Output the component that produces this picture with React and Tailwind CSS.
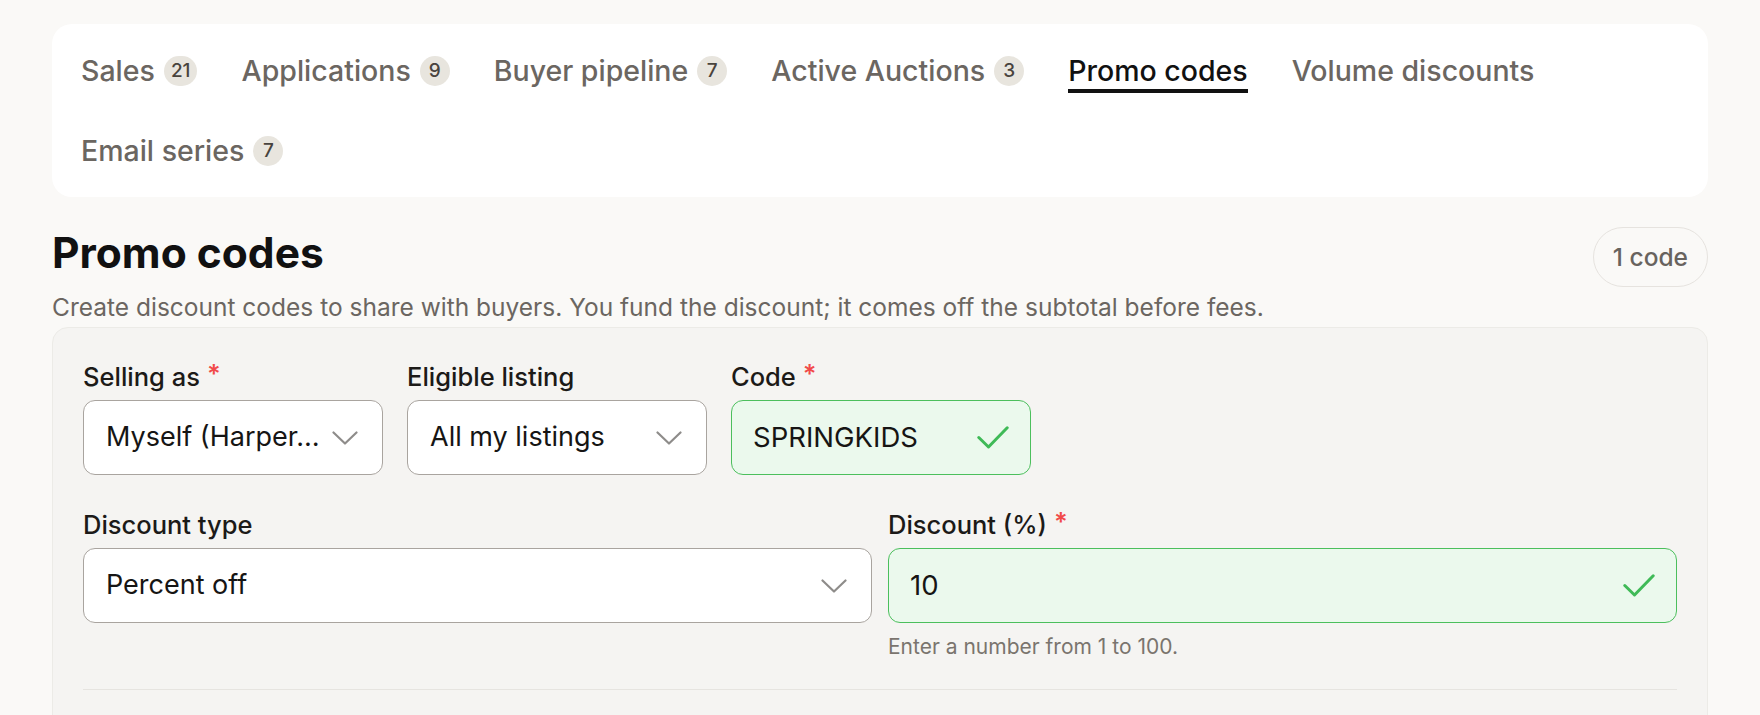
import { useState } from 'react';

const TABS = [
  { label: 'Sales', count: 21 },
  { label: 'Applications', count: 9 },
  { label: 'Buyer pipeline', count: 7 },
  { label: 'Active Auctions', count: 3 },
  { label: 'Promo codes' },
  { label: 'Volume discounts' },
  { label: 'Email series', count: 7 },
];

function Chevron() {
  return (
    <svg width="26" height="14" viewBox="0 0 26 14" fill="none" className="shrink-0">
      <path d="M1.5 1.5L13 12.5L24.5 1.5" stroke="#8e8c8a" strokeWidth="2.2" strokeLinecap="round" strokeLinejoin="round" />
    </svg>
  );
}

function Check() {
  return (
    <svg width="32" height="23" viewBox="0 0 32 23" fill="none" className="shrink-0">
      <path d="M1.8 11.5L11.5 21L30.2 1.8" stroke="#3fba57" strokeWidth="3" strokeLinecap="round" strokeLinejoin="round" />
    </svg>
  );
}

function Label({ children, required }) {
  return (
    <label className="flex items-start text-[25.5px] leading-[32px] font-medium text-[#1c1a18] mb-[7px]">
      {children}
      {required && <span className="ml-[7px] -mt-[3px] text-[#f14a4a] font-semibold">*</span>}
    </label>
  );
}

function Select({ value, className = '' }) {
  return (
    <div className={`h-[75px] flex items-center justify-between gap-[6px] bg-white border-[1.5px] border-[#a9a49f] rounded-[12px] pl-[22px] pr-[24px] ${className}`}>
      <span className="min-w-0 whitespace-nowrap overflow-hidden text-[27px] text-[#161514]">{value}</span>
      <Chevron />
    </div>
  );
}

function ValidInput({ value, className = '' }) {
  return (
    <div className={`h-[75px] flex items-center justify-between bg-[#ebf9ed] border-[1.5px] border-[#4cbf5d] rounded-[12px] pl-[21px] pr-[21px] ${className}`}>
      <span className="text-[27.5px] text-[#161514]">{value}</span>
      <Check />
    </div>
  );
}

export default function App() {
  const [active, setActive] = useState('Promo codes');

  return (
    <div className="min-h-screen bg-[#faf9f7] px-[52px] pt-[24px] font-['Inter',sans-serif]">
      {/* Tabs */}
      <div className="bg-white rounded-[20px] pl-[29px] pr-[29px] pt-[29px] pb-[24px]">
        <div className="flex flex-wrap gap-x-[44px] gap-y-[40px]">
          {TABS.map((t) => (
            <button
              key={t.label}
              onClick={() => setActive(t.label)}
              className={`flex items-center h-[40px] border-b-4 text-[28.5px] leading-[36px] font-medium ${
                active === t.label ? 'border-[#111] text-[#111]' : 'border-transparent text-[#6b6661]'
              }`}
            >
              <span>{t.label}</span>
              {t.count != null && (
                <span className="ml-[9px] min-w-[30px] h-[30px] px-[7px] rounded-full bg-[#e8e5de] text-[#48433d] text-[19px] font-medium flex items-center justify-center">
                  {t.count}
                </span>
              )}
            </button>
          ))}
        </div>
      </div>

      {/* Header */}
      <div className="mt-[30px]">
        <div className="flex items-start justify-between h-[60px]">
          <h1 className="text-[42.5px] leading-[48px] font-bold text-[#111] mt-[2px]">Promo codes</h1>
          <span className="h-[60px] px-[19px] flex items-center rounded-full border-[1.5px] border-[#e6e3df] text-[24.5px] font-medium text-[#68635e]">
            1 code
          </span>
        </div>
        <p className="mt-[4px] text-[24.5px] leading-[32px] text-[#6b6661]">
          Create discount codes to share with buyers. You fund the discount; it comes off the subtotal before fees.
        </p>
      </div>

      {/* Form panel */}
      <div className="mt-[4px] bg-[#f5f4f2] border border-[#ecebe7] rounded-[16px] px-[30px] pt-[33px] pb-[60px]">
        <div className="flex gap-[24px]">
          <div className="w-[300px]">
            <Label required>Selling as</Label>
            <Select value="Myself (Harper…" />
          </div>
          <div className="w-[300px]">
            <Label>Eligible listing</Label>
            <Select value="All my listings" />
          </div>
          <div className="w-[300px]">
            <Label required>Code</Label>
            <ValidInput value="SPRINGKIDS" />
          </div>
        </div>

        <div className="grid grid-cols-2 gap-x-[16px] mt-[34px]">
          <div>
            <Label>Discount type</Label>
            <Select value="Percent off" />
          </div>
          <div>
            <Label required>Discount (%)</Label>
            <ValidInput value="10" />
            <p className="mt-[10px] text-[21px] leading-[28px] text-[#7a746e]">Enter a number from 1 to 100.</p>
          </div>
        </div>

        <div className="mt-[28px] border-t border-[#e6e4e0]" />
      </div>
    </div>
  );
}
